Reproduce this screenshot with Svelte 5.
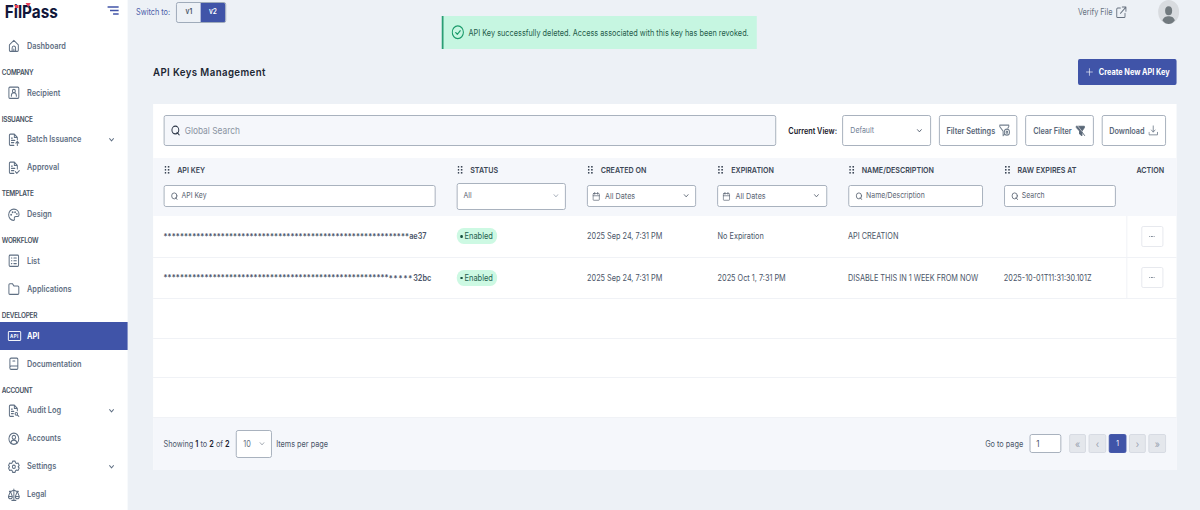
<script>
  const nav = [
    { items: [{ icon: 'home', label: 'Dashboard' }] },
    { title: 'COMPANY', items: [{ icon: 'recipient', label: 'Recipient' }] },
    {
      title: 'ISSUANCE',
      items: [
        { icon: 'batch', label: 'Batch Issuance', expandable: true },
        { icon: 'approval', label: 'Approval' }
      ]
    },
    { title: 'TEMPLATE', items: [{ icon: 'palette', label: 'Design' }] },
    {
      title: 'WORKFLOW',
      items: [
        { icon: 'list', label: 'List' },
        { icon: 'folder', label: 'Applications' }
      ]
    },
    {
      title: 'DEVELOPER',
      items: [
        { icon: 'api', label: 'API' },
        { icon: 'book', label: 'Documentation' }
      ]
    },
    {
      title: 'ACCOUNT',
      items: [
        { icon: 'audit', label: 'Audit Log', expandable: true },
        { icon: 'account', label: 'Accounts' },
        { icon: 'settings', label: 'Settings', expandable: true },
        { icon: 'legal', label: 'Legal' }
      ]
    }
  ];

  const columns = [
    { label: 'API KEY', filter: 'search', text: 'API Key' },
    { label: 'STATUS', filter: 'select', text: 'All' },
    { label: 'CREATED ON', filter: 'date', text: 'All Dates' },
    { label: 'EXPIRATION', filter: 'date', text: 'All Dates' },
    { label: 'NAME/DESCRIPTION', filter: 'search', text: 'Name/Description' },
    { label: 'RAW EXPIRES AT', filter: 'search', text: 'Search' }
  ];

  const keys = [
    {
      masked: '*'.repeat(60),
      low: '',
      tail: 'ae37',
      status: 'Enabled',
      created: '2025 Sep 24, 7:31 PM',
      expiration: 'No Expiration',
      name: 'API CREATION',
      raw: ''
    },
    {
      masked: '*'.repeat(55),
      low: '*****',
      tail: '32bc',
      status: 'Enabled',
      created: '2025 Sep 24, 7:31 PM',
      expiration: '2025 Oct 1, 7:31 PM',
      name: 'DISABLE THIS IN 1 WEEK FROM NOW',
      raw: '2025-10-01T11:31:30.101Z'
    }
  ];

  let active = $state('API');
  let version = $state('v2');
</script>

{#snippet icon(name, size = 14)}
  <svg class="icon" width={size} height={size} viewBox="0 0 24 24" fill="none" stroke="currentColor" stroke-width="2" stroke-linecap="round" stroke-linejoin="round">
    {#if name === 'home'}
      <path d="M3 10.5 12 2.5l9 8V20a2 2 0 0 1-2 2H5a2 2 0 0 1-2-2z" />
      <path d="M8.500 22v-6a3.500 3.500 0 0 1 7 0v6M12 18v4" />
    {:else if name === 'recipient'}
      <rect x="2" y="2" width="20" height="20" rx="2" />
      <circle cx="12" cy="9" r="3" />
      <path d="M7 18v-1a5 5 0 0 1 10 0v1" />
    {:else if name === 'batch'}
      <path d="M12 22H5a2 2 0 0 1-2-2V4a2 2 0 0 1 2-2h8l6 6v4M13 2v6h6M7 9h2M7 13h7M7 17h5" />
      <path d="M19 22v-7M16 18l3-3 3 3" />
    {:else if name === 'approval'}
      <path d="M12 22H5a2 2 0 0 1-2-2V4a2 2 0 0 1 2-2h8l6 6v6M13 2v6h6M7 9h2M7 13h7M7 17h5" />
      <path d="m15 19 3 3 5-5" />
    {:else if name === 'palette'}
      <path d="M12 2C6.200 2 1.500 6.300 1.500 12S6 22 11 22c2 0 2.500-1.300 2-3-.6-2.300.6-4 3-4h3.500c2 0 3-1.300 3-3.500C22.500 6 18 2 12 2z" />
      <circle cx="6.500" cy="12" r=".8" /><circle cx="9.500" cy="7.500" r=".8" /><circle cx="14.500" cy="7.500" r=".8" /><circle cx="18" cy="10.500" r=".6" />
    {:else if name === 'list'}
      <rect x="2.500" y="2" width="19" height="20" rx="2" />
      <path d="M7 7h1M12 7h5M7 12h1M12 12h5M7 17h1M12 17h5" />
    {:else if name === 'folder'}
      <path d="M2 5a2 2 0 0 1 2-2h5l3 4h8a2 2 0 0 1 2 2v11a2 2 0 0 1-2 2H4a2 2 0 0 1-2-2z" />
    {:else if name === 'book'}
      <path d="M4 19V4.500A2.500 2.500 0 0 1 6.500 2H18a2 2 0 0 1 2 2v16a2 2 0 0 1-2 2H6.500A2.500 2.500 0 0 1 4 19.500 2.500 2.500 0 0 1 6.500 16H20M10 7h4" />
    {:else if name === 'audit'}
      <path d="M11 22H5a2 2 0 0 1-2-2V4a2 2 0 0 1 2-2h8l6 6v4M13 2v6h6M7 9h2M7 13h5M7 17h4" />
      <circle cx="17" cy="17.500" r="2.500" /><path d="m19 19.500 3 2.500" />
    {:else if name === 'account'}
      <circle cx="12" cy="12" r="10" /><circle cx="12" cy="9.500" r="3.500" />
      <path d="M6 19.500c.5-3.500 3-5 6-5s5.500 1.500 6 5" />
    {:else if name === 'settings'}
      <path d="M9.500 2h5l.9 3 2.100 1.200 3-.8 2.300 4.300L20.700 12l2.100 2.300-2.300 4.300-3-.8-2.100 1.200-.9 3h-5l-.9-3-2.100-1.200-3 .8-2.300-4.300L3.300 12 1.200 9.700l2.300-4.300 3 .8L8.600 5z" />
      <circle cx="12" cy="12" r="3" />
    {:else if name === 'legal'}
      <path d="M12 2v20M8 22h8M3 6h3c2 0 4-2 6-2s4 2 6 2h3M5 6l-4 9a4 4 0 0 0 8 0zM19 6l-4 9a4 4 0 0 0 8 0zM1 15h8M15 15h8" />
    {:else if name === 'chevron'}
      <path d="m5 8.500 7 7 7-7" />
    {:else if name === 'search'}
      <circle cx="11.500" cy="11" r="8.500" stroke-width="2.500" /><path d="m15.500 16 5.500 5.500" stroke-width="2.500" />
    {:else if name === 'calendar'}
      <rect x="2.500" y="4" width="19" height="18" rx="2" /><path d="M2.500 10h19M7.500 1v5M16.500 1v5" />
    {:else if name === 'external'}
      <path d="M10 4H4a2 2 0 0 0-2 2v14a2 2 0 0 0 2 2h14a2 2 0 0 0 2-2v-6M14 2h8v8M22 2 10 14" />
    {:else if name === 'check'}
      <circle cx="12" cy="12" r="10.500" /><path d="m8 12.500 3 3 5.500-6" />
    {:else if name === 'funnel-gear'}
      <path d="M9 21.500V13L2 5V2h19v3l-2 2.500M9 21.500l3-2" />
      <circle cx="17" cy="15" r="5.500" /><circle cx="17" cy="15" r="1.800" />
    {:else if name === 'funnel-off'}
      <path d="M2.500 2.500h18v3L15 12v9.500L9.500 18v-6l-7-6.500z" fill="currentColor" />
      <path d="m5 1.500 17 19" stroke="#fff" stroke-width="1.200" /><path d="m15 14 6 7" />
    {:else if name === 'download'}
      <path d="M12 2v13M7.500 11l4.500 4.500 4.500-4.500M1.500 16v5.500h21V16" />
    {:else if name === 'plus'}
      <path d="M12 2v20M2 12h20" />
    {/if}
  </svg>
{/snippet}

{#snippet grip()}
  <svg class="grip" width="6" height="8" viewBox="0 0 6 8" fill="currentColor">
    {#each [0, 3, 6] as y}
      <rect x="0" {y} width="1.800" height="1.600" />
      <rect x="3.700" {y} width="1.800" height="1.600" />
    {/each}
  </svg>
{/snippet}

<div class="app">
  <aside class="sidebar">
    <div class="brand">
      <span class="logo">
        FilPass
        <i class="dot"></i>
        <i class="flag"></i>
      </span>
      <svg width="13" height="9" viewBox="0 0 13 9" stroke="#4254a8" stroke-width="1.500">
        <path d="M0 1h13M3 4.500h10M6.500 8H13" />
      </svg>
    </div>
    <nav>
      {#each nav as group}
        {#if group.title}<div class="group-title">{group.title}</div>{/if}
        {#each group.items as item}
          <button class="nav-item" class:active={active === item.label} onclick={() => (active = item.label)}>
            {#if item.icon === 'api'}
              <span class="api-icon">API</span>
            {:else}
              <span class="nav-icon">{@render icon(item.icon, 13.5)}</span>
            {/if}
            <span class="nav-label">{item.label}</span>
            {#if item.expandable}<span class="nav-arrow">{@render icon('chevron', 7.5)}</span>{/if}
          </button>
        {/each}
      {/each}
    </nav>
  </aside>

  <main>
    <header class="topbar">
      <span class="switch-label">Switch to:</span>
      <div class="switch">
        {#each ['v1', 'v2'] as v}
          <button class:on={version === v} onclick={() => (version = v)}>{v}</button>
        {/each}
      </div>
      <div class="verify"><span>Verify File</span>{@render icon('external', 12.5)}</div>
      <svg class="avatar" width="24" height="24" viewBox="0 0 24 24">
        <circle cx="12" cy="12" r="12" fill="#d8dbdf" />
        <ellipse cx="12" cy="10.700" rx="4" ry="4.500" fill="#71797e" />
        <path d="M5 20.500c1-3.500 4-4.300 7-4.300s6 .8 7 4.300C17 23 14.500 24 12 24s-5-1-7-3.500z" fill="#71797e" />
      </svg>
    </header>

    <div class="toast">
      {@render icon('check', 14.5)}
      <span>API Key successfully deleted. Access associated with this key has been revoked.</span>
    </div>

    <div class="page-head">
      <h1>API Keys Management</h1>
      <button class="create">{@render icon('plus', 8)}<span>Create New API Key</span></button>
    </div>

    <section class="card">
      <div class="toolbar">
        <div class="global-search">{@render icon('search', 11)}<span>Global Search</span></div>
        <span class="view-label">Current View:</span>
        <div class="view-select"><span>Default</span>{@render icon('chevron', 7.5)}</div>
        <button class="tool settings">Filter Settings {@render icon('funnel-gear', 13)}</button>
        <button class="tool clear">Clear Filter {@render icon('funnel-off', 12)}</button>
        <button class="tool download">Download {@render icon('download', 11)}</button>
      </div>

      <div class="thead grid">
        {#each columns as col}
          <div class="th">
            <div class="th-label">{@render grip()}<span>{col.label}</span></div>
            <div class="filter-slot">
              <div class="filter {col.filter}">
                {#if col.filter === 'search'}{@render icon('search', 8.5)}{/if}
                {#if col.filter === 'date'}{@render icon('calendar', 9)}{/if}
                <span>{col.text}</span>
                {#if col.filter !== 'search'}<b>{@render icon('chevron', 7.5)}</b>{/if}
              </div>
            </div>
          </div>
        {/each}
        <div class="th action-head">ACTION</div>
      </div>

      {#each keys as key}
        <div class="row grid">
          <div class="key"><span class="mask">{key.masked}</span><span class="low">{key.low}</span>{key.tail}</div>
          <div><span class="badge"><i></i>{key.status}</span></div>
          <div>{key.created}</div>
          <div>{key.expiration}</div>
          <div>{key.name}</div>
          <div class="raw">{key.raw}</div>
          <div class="action"><button aria-label="More actions"><i></i><i></i><i></i></button></div>
        </div>
      {/each}
      <div class="empty"></div>
      <div class="empty"></div>
      <div class="empty"></div>

      <footer>
        <span class="showing">Showing <b>1</b> to <b>2</b> of <b>2</b></span>
        <div class="page-size"><span>10</span>{@render icon('chevron', 7.5)}</div>
        <span class="per-page">Items per page</span>
        <span class="goto">Go to page</span>
        <div class="page-input">1</div>
        <div class="pager">
          <button>«</button>
          <button>‹</button>
          <button class="current">1</button>
          <button>›</button>
          <button>»</button>
        </div>
      </footer>
    </section>
  </main>
</div>

<style>
  :global(body) {
    margin: 0;
    overflow: hidden;
    background: #edf1f6;
  }

  /* condensed presentation: everything is laid out wider and squeezed horizontally */
  .app {
    display: flex;
    width: 1363.64px;
    height: 510px;
    transform: scaleX(.88);
    transform-origin: 0 0;
    overflow: hidden;
    background: #edf1f6;
    color: #4a5568;
    font-family: Inter, "Liberation Sans", sans-serif;
    font-size: 8.3px;
    line-height: 1;
    white-space: nowrap;
  }

  button {
    margin: 0;
    padding: 0;
    border: 0;
    background: none;
    color: inherit;
    font: inherit;
    cursor: pointer;
  }

  .icon, svg { display: block; flex-shrink: 0; }

  .sidebar {
    width: 145.45px;
    flex-shrink: 0;
    background: #fff;
  }

  .brand {
    display: flex;
    align-items: flex-start;
    justify-content: space-between;
    box-sizing: border-box;
    height: 32px;
    padding: 3px 10px 0 5.5px;
  }

  .brand svg { margin-top: 3px; }

  .logo {
    position: relative;
    font-size: 17.4px;
    font-weight: 700;
    color: #11163a;
  }

  .dot {
    position: absolute;
    left: 11.3px;
    top: 1.5px;
    width: 4px;
    height: 3.5px;
    background: #e9415a;
  }

  .flag {
    position: absolute;
    left: 23px;
    top: 0;
    border: 3px solid transparent;
    border-top: 4px solid #e9415a;
    border-bottom: 0;
  }

  .group-title {
    box-sizing: border-box;
    height: 18.75px;
    padding: 8.8px 0 0 2px;
    font-size: 7.3px;
    font-weight: 600;
    letter-spacing: -.3px;
    color: #465161;
  }

  .nav-item {
    display: flex;
    align-items: center;
    width: 100%;
    height: 28px;
    color: #5f6f83;
    font-weight: 600;
    text-align: left;
  }

  .nav-icon { width: 21.5px; margin-left: 9.2px; }
  .nav-label { flex: 1; font-size: 8.4px; }
  .nav-arrow { margin-right: 15px; }
  .nav-arrow :global(svg) { stroke-width: 3.5; }

  .api-icon {
    box-sizing: border-box;
    width: 14.5px;
    height: 10px;
    margin: 0 7.2px 0 9px;
    border: 1px solid #fff;
    border-radius: 1px;
    font-size: 5px;
    font-weight: 700;
    line-height: 8px;
    text-align: center;
    letter-spacing: .4px;
  }

  .nav-item.active {
    background: #4054a8;
    color: #fff;
    font-weight: 700;
  }

  main {
    flex: 1;
    padding: 0 27.3px 0 28.4px;
  }

  .topbar {
    display: flex;
    align-items: center;
    height: 24px;
    margin: 0 -3.5px 0 -19.3px;
  }

  .switch-label { width: 45.5px; color: #4a5ba8; }

  .switch {
    display: flex;
    box-sizing: border-box;
    height: 21px;
    border: 1px solid #9aa5b5;
    border-radius: 2.5px;
    overflow: hidden;
  }

  .switch button { width: 27.3px; font-weight: 600; font-size: 7.5px; }
  .switch .on { background: #4054a8; color: #fff; }

  .verify {
    display: flex;
    align-items: center;
    gap: 4px;
    margin-left: auto;
    margin-right: 35.5px;
    color: #66717f;
  }

  .avatar { flex-shrink: 0; }

  .toast {
    position: absolute;
    left: 502.3px;
    top: 16px;
    display: flex;
    align-items: center;
    gap: 4.5px;
    box-sizing: border-box;
    width: 358px;
    height: 33px;
    padding-left: 9px;
    border-left: 2.3px solid #2a9d74;
    background: #c6f6e1;
    color: #1c9b6b;
  }

  .toast span { padding-top: .6px; letter-spacing: .02px; color: #1f5c4a; }

  .page-head {
    display: flex;
    align-items: center;
    justify-content: space-between;
    height: 26px;
    margin-top: 35px;
  }

  h1 {
    margin: 0;
    font-size: 11px;
    font-weight: 600;
    letter-spacing: .45px;
    color: #1c2733;
  }

  .create {
    display: flex;
    align-items: center;
    gap: 6.5px;
    box-sizing: border-box;
    width: 111.5px;
    height: 26px;
    padding-left: 9px;
    border-radius: 2px;
    background: #4054a8;
    color: #fff;
    font-size: 8.3px;
    font-weight: 700;
  }

  .card {
    height: 366.5px;
    margin-top: 18.5px;
    background: #fff;
  }

  .toolbar {
    display: flex;
    align-items: center;
    box-sizing: border-box;
    height: 54.5px;
    padding: 0 12px;
  }

  .global-search, .view-select, .tool, .filter, .page-size, .page-input {
    display: flex;
    align-items: center;
    box-sizing: border-box;
    border: 1px solid #a3adba;
    border-radius: 2.5px;
    background: #fff;
  }

  .global-search {
    gap: 5px;
    width: 696px;
    height: 31px;
    padding-left: 7px;
    background: #f5f7fb;
    color: #2d3748;
    font-size: 9.5px;
  }

  .global-search span { color: #8a93a2; }

  .view-label {
    width: 61.5px;
    margin-left: 14px;
    color: #1a202c;
    font-weight: 600;
  }

  .view-select {
    justify-content: space-between;
    width: 100.6px;
    height: 31px;
    padding: 0 8px;
    font-size: 7.9px;
    color: #718096;
  }

  .view-select :global(svg) { color: #4a5568; stroke-width: 3; }

  .tool {
    justify-content: center;
    gap: 4px;
    height: 31px;
    font-weight: 600;
    color: #5a6778;
  }

  .settings { width: 89.5px; margin-left: 9px; }
  .clear { width: 78px; margin-left: 8.5px; }
  .download { width: 73px; margin-left: 8.7px; }
  .settings :global(svg), .download :global(svg) { color: #74808f; }

  .grid {
    display: grid;
    grid-template-columns: 333px repeat(3, 148.3px) 177px 151.7px 1fr;
  }

  .thead { height: 58px; background: #f5f7fb; }

  .th { padding: 0 12px; }

  .th-label {
    display: flex;
    align-items: center;
    height: 24.5px;
    font-size: 8.1px;
    font-weight: 600;
    color: #3c4756;
  }

  .grip { margin: 0 8.5px 0 1px; }

  .filter-slot {
    display: flex;
    align-items: center;
    height: 27px;
  }

  .filter {
    gap: 4px;
    width: 100%;
    height: 22px;
    padding: 0 7px;
    font-size: 7.8px;
    color: #5a6472;
  }

  .filter b { margin-left: auto; }
  .filter.select { height: 27px; }
  .filter.select b { color: #8a94a3; }
  .filter.select b :global(svg) { stroke-width: 2.5; }
  .filter.date { gap: 6px; padding-left: 4.5px; font-size: 8.2px; }
  .filter.date b :global(svg) { stroke-width: 3; }

  .action-head {
    padding: 8.3px 0 0 11px;
    font-size: 8.1px;
    font-weight: 600;
    color: #3c4756;
  }

  .row {
    height: 41.5px;
    box-sizing: border-box;
    border-bottom: 1px solid #f0f2f6;
  }

  .row > div {
    display: flex;
    align-items: center;
    padding-left: 12px;
  }

  .row > .key { font-weight: 600; font-size: 8.3px; }
  .mask { padding-top: 1px; letter-spacing: .175px; }
  .low { padding-top: 2px; letter-spacing: 1.1px; }

  .badge {
    display: flex;
    align-items: center;
    gap: 2px;
    height: 16px;
    padding: 0 5px 0 4.5px;
    border-radius: 8px;
    background: #cdf9e3;
    color: #24614f;
    font-size: 8.5px;
  }

  .badge i { width: 2.5px; height: 2.5px; border-radius: 50%; background: #17503f; }

  .row > .action {
    justify-content: center;
    padding: 0;
    border-left: 1px solid #eef0f5;
  }

  .action button {
    display: flex;
    align-items: center;
    justify-content: center;
    gap: 1px;
    box-sizing: border-box;
    width: 25px;
    height: 21px;
    border: 1px solid #e5e8ed;
    border-radius: 2px;
  }

  .action i { width: 1.5px; height: 1px; background: #7b8694; }

  .empty {
    box-sizing: border-box;
    height: 39.67px;
    border-bottom: 1px solid #f0f2f6;
  }

  footer {
    display: flex;
    align-items: center;
    box-sizing: border-box;
    height: 52px;
    padding: 0 12px;
    background: #f5f7fb;
  }

  .showing { width: 82.5px; }
  .showing b { font-weight: 600; color: #1a202c; }

  .page-size {
    justify-content: space-between;
    width: 41px;
    height: 28px;
    padding: 0 7px;
    color: #66717f;
  }

  .per-page { margin-left: 4.5px; }
  .goto { margin-left: auto; margin-right: 7px; }

  .page-input {
    width: 36.5px;
    height: 19px;
    padding-left: 7px;
    font-size: 9px;
  }

  .pager {
    display: flex;
    gap: 3px;
    margin-left: 8.5px;
    margin-right: -.5px;
  }

  .pager button {
    box-sizing: border-box;
    width: 19.7px;
    height: 19px;
    border: 1px solid #d5dae1;
    border-radius: 2px;
    background: #e4e7ec;
    color: #98a1af;
    font-size: 10px;
  }

  .pager .current { border-color: #4054a8; background: #4054a8; color: #fff; font-size: 7.5px; }
</style>
